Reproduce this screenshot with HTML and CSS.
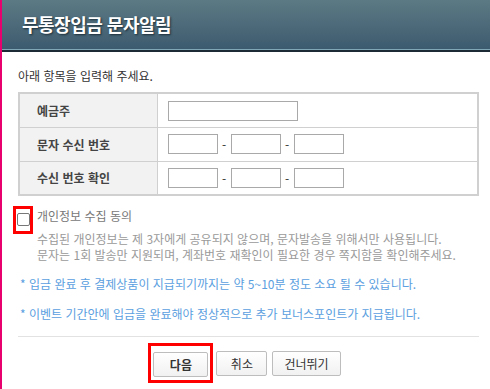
FILE: index.html
```html
<!DOCTYPE html>
<html lang="ko">

<head>
  <meta charset="UTF-8">
  <meta name="viewport" content="width=device-width, initial-scale=1.0">
  <title>무통장입금 문자알림</title>
  <link rel="stylesheet" href="styles.css">
</head>

<body>
  <div class="pop">
    <div class="pop-head">
      <h1>무통장입금 문자알림</h1>
    </div>
    <div class="pop-body">
      <p class="intro">아래 항목을 입력해 주세요.</p>
      <table class="form-tbl">
        <tr>
          <th>예금주</th>
          <td><input type="text" class="ipt-name"></td>
        </tr>
        <tr>
          <th>문자 수신 번호</th>
          <td>
            <input type="text" class="ipt-tel"><span class="dash">-</span><input type="text" class="ipt-tel"><span class="dash">-</span><input type="text" class="ipt-tel">
          </td>
        </tr>
        <tr>
          <th>수신 번호 확인</th>
          <td>
            <input type="text" class="ipt-tel"><span class="dash">-</span><input type="text" class="ipt-tel"><span class="dash">-</span><input type="text" class="ipt-tel">
          </td>
        </tr>
      </table>

      <div class="agree">
        <span class="mark chk-mark"><span class="chk"></span></span>
        <div class="agree-txt">
          <label class="agree-tit">개인정보 수집 동의</label>
          <p class="agree-desc">수집된 개인정보는 제 3자에게 공유되지 않으며, 문자발송을 위해서만 사용됩니다.</p>
          <p class="agree-desc">문자는 1회 발송만 지원되며, 계좌번호 재확인이 필요한 경우 쪽지함을 확인해주세요.</p>
        </div>
      </div>

      <p class="note">* 입금 완료 후 결제상품이 지급되기까지는 약 5~10분 정도 소요 될 수 있습니다.</p>
      <p class="note">* 이벤트 기간안에 입금을 완료해야 정상적으로 추가 보너스포인트가 지급됩니다.</p>

      <div class="btns">
        <span class="mark btn-mark"><button class="btn btn-next">다음</button></span>
        <button class="btn">취소</button>
        <button class="btn">건너뛰기</button>
      </div>
    </div>
  </div>
</body>

</html>
```

FILE: styles.css
```css
* {
  margin: 0;
  padding: 0;
  box-sizing: border-box;
}

html,
body {
  background-color: #fff;
}

body {
  font-family: "Noto Sans CJK KR", "Noto Sans", sans-serif;
  font-size: 12px;
  color: #333;
}

.pop {
  width: 490px;
  height: 389px;
  border-left: 2px solid #e8006e;
  overflow: hidden;
}

.pop-head {
  height: 52px;
  background: linear-gradient(#5c7a84, #3c5a6e);
  border-bottom: 2px solid #1b2a35;
  box-shadow: inset 0 -1px 0 #7fa7b6;
  padding: 11px 0 0 20px;
}

.pop-head h1 {
  font-size: 18px;
  font-weight: bold;
  color: #fff;
  letter-spacing: -0.5px;
  text-shadow: 1px 1px 2px #1d2d38;
  line-height: 26px;
}

.pop-body {
  padding: 15px 10px 0 16px;
}

.intro {
  line-height: 18px;
  margin-bottom: 7px;
}

.form-tbl {
  width: 461px;
  border-collapse: collapse;
  border: 2px solid #d0d0d0;
}

.form-tbl th,
.form-tbl td {
  border: 1px solid #d0d0d0;
  height: 34px;
}

.form-tbl th {
  width: 138px;
  background-color: #f2f2f2;
  text-align: left;
  padding-left: 17px;
  font-weight: bold;
  color: #444;
}

.form-tbl td {
  padding-left: 10px;
}

.form-tbl input {
  height: 20px;
  border: 1px solid #a9a9a9;
  vertical-align: middle;
}

.ipt-name {
  width: 130px;
}

.ipt-tel {
  width: 50px;
}

.dash {
  display: inline-block;
  width: 13px;
  text-align: center;
  vertical-align: middle;
}

.mark {
  display: inline-block;
  border: 3px solid #f00;
}

.agree {
  display: flex;
  margin-top: 10px;
}

.chk-mark {
  width: 20px;
  height: 28px;
  margin-left: -5px;
  padding: 4px 0 0 1px;
}

.chk {
  display: block;
  width: 13px;
  height: 13px;
  border: 1px solid #777;
  border-radius: 2px;
  background: #fff;
}

.agree-txt {
  padding-left: 4px;
  padding-top: 2px;
}

.agree-tit {
  display: block;
  color: #777;
  line-height: 16px;
}

.agree-desc {
  color: #9a9a9a;
  line-height: 16px;
  white-space: nowrap;
}

.agree-tit + .agree-desc {
  margin-top: 7px;
}

.note {
  color: #5ba0e0;
  line-height: 16px;
  padding-left: 2px;
}

.agree + .note {
  margin-top: 13px;
}

.note + .note {
  margin-top: 14px;
}

.btns {
  margin-top: 14px;
  border-top: 1px solid #e2e2e2;
  width: 461px;
  padding-top: 6px;
  display: flex;
  justify-content: center;
  align-items: center;
  gap: 5px;
  padding-right: 8px;
}

.btn-mark {
  padding: 6px 2px 3px 2px;
  margin-right: -2px;
}

.btn {
  height: 25px;
  padding: 0 11px;
  border: 1px solid #bdbdbd;
  border-radius: 2px;
  background: linear-gradient(#fff, #f1f1f1);
  font-family: "Noto Sans CJK KR", "Noto Sans", sans-serif;
  font-size: 12px;
  color: #333;
  min-width: 51px;
  display: block;
}

.btn-next {
  width: 55px;
  font-weight: bold;
}
```
